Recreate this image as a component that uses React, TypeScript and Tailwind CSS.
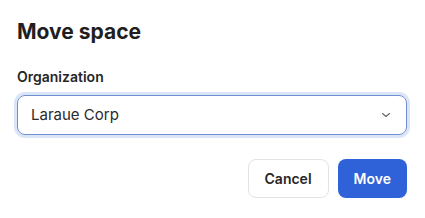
import React from "react";

export default function App() {
  return (
    <div className="w-[425px] h-[218px] bg-white px-[17px] pt-[18px]" style={{ fontFamily: "Inter, 'Noto Sans', sans-serif" }}>
      <h1 className="text-[21px] leading-[28px] font-bold text-[#1f1f1f]">Move space</h1>
      <div className="mt-[21px] text-[14px] leading-[20px] font-semibold text-[#262626]">Organization</div>
      <div className="mt-[8px] h-[40px] w-[390px] rounded-[8px] border border-[#6f8fd1] ring-[3px] ring-[#dbe5f8] flex items-center justify-between pl-[13px] pr-[14px]">
        <span className="text-[15px] text-[#2a2a2a]">Laraue Corp</span>
        <svg width="12" height="12" viewBox="0 0 24 24" fill="none" stroke="#666" strokeWidth="2.2" strokeLinecap="round" strokeLinejoin="round">
          <path d="M5 9l7 6 7-6" />
        </svg>
      </div>
      <div className="mt-[24px] w-[390px] flex justify-end gap-[9px]">
        <button className="h-[39px] px-[16px] rounded-[8px] border border-[#e3e3e3] bg-white text-[14px] font-semibold text-[#262626]">Cancel</button>
        <button className="h-[39px] px-[16px] rounded-[8px] bg-[#2f62d8] text-[14px] font-semibold text-white">Move</button>
      </div>
    </div>
  );
}
